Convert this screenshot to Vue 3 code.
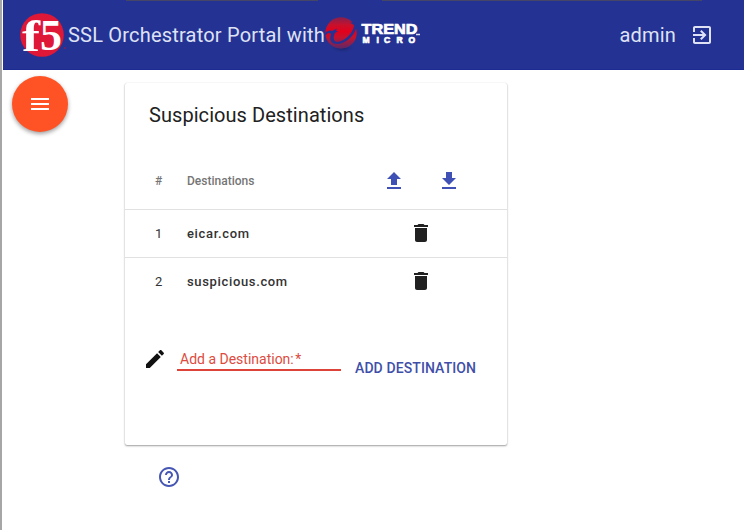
<script setup>
const rows = [
  { id: 1, name: 'eicar.com' },
  { id: 2, name: 'suspicious.com' },
]
</script>

<template>
  <div class="page">
    <header class="toolbar">
      <svg class="f5" width="48" height="48" viewBox="0 0 48 48">
        <circle cx="24" cy="24" r="21.8" fill="#df1838" />
        <text class="f5-letter" x="4" y="39.5" font-size="44" textLength="18" lengthAdjust="spacingAndGlyphs">f</text>
        <text class="f5-letter" x="22" y="39" font-size="45" textLength="22" lengthAdjust="spacingAndGlyphs">5</text>
        <circle cx="47" cy="37" r="1" fill="#7d2065" />
      </svg>
      <span class="title">SSL Orchestrator Portal with</span>
      <svg class="trend" width="98" height="38" viewBox="0 0 98 38">
        <defs>
          <linearGradient id="ball" x1="0" y1="0" x2="0" y2="1">
            <stop offset="0" stop-color="#85204e" />
            <stop offset=".25" stop-color="#c9102c" />
            <stop offset=".45" stop-color="#e2001c" />
            <stop offset=".65" stop-color="#c2132f" />
            <stop offset="1" stop-color="#5b286a" />
          </linearGradient>
          <radialGradient id="shade">
            <stop offset="0" stop-color="#151c5c" />
            <stop offset="1" stop-color="#233393" stop-opacity="0" />
          </radialGradient>
        </defs>
        <ellipse cx="17" cy="31.500" rx="14" ry="6" fill="url(#shade)" />
        <circle cx="16" cy="17" r="15.700" fill="url(#ball)" />
        <path d="M0 17C3 14 6 14 7 15L12 12.500L11 15H13L10 17C8 21 8 25 12 26C19 26 28 17 29 10C29 8 27 8 25 7C30 5 33 8 31 13C28 21 20 28 12 28C6 28 4 24 6 18C4 16 2 17 0 20Z" fill="#243293" />
        <text class="brand" x="36.500" y="17.800" font-size="14.600" textLength="56" lengthAdjust="spacingAndGlyphs">TREND</text>
        <g class="brand" font-size="8.500"><text x="37.500" y="26.600">M</text><text x="51.500" y="26.600">I</text><text x="59" y="26.600">C</text><text x="71.500" y="26.600">R</text><text x="83.500" y="26.600">O</text></g>
        <path d="M91 18.500h4" stroke="#d9ddf2" stroke-width="1.500" />
      </svg>
      <span class="user">admin</span>
      <svg class="logout" width="24" height="24" viewBox="0 0 24 24">
        <path d="M10.090 15.590L11.500 17l5-5-5-5-1.410 1.410L12.670 11H3v2h9.670l-2.580 2.590zM19 3H5c-1.110 0-2 .9-2 2v4h2V5h14v14H5v-4H3v4c0 1.100.89 2 2 2h14c1.100 0 2-.9 2-2V5c0-1.100-.9-2-2-2z" />
      </svg>
    </header>

    <div class="body">
      <button class="fab" type="button">
        <svg width="24" height="24" viewBox="0 0 24 24"><path d="M3 18h18v-2H3v2zm0-5h18v-2H3v2zm0-7v2h18V6H3z" /></svg>
      </button>
      <main class="main">
        <section class="card">
          <h1>Suspicious Destinations</h1>
          <div class="row head">
            <span class="num">#</span>
            <span class="name">Destinations</span>
            <svg class="up" width="24" height="24" viewBox="0 0 24 24"><path d="M9 16h6v-6h4l-7-7-7 7h4zm-4 2h14v2H5z" /></svg>
            <svg class="down" width="24" height="24" viewBox="0 0 24 24"><path d="M19 9h-4V3H9v6H5l7 7 7-7zM5 18v2h14v-2H5z" /></svg>
          </div>
          <div v-for="row in rows" :key="row.id" class="row item">
            <span class="num">{{ row.id }}</span>
            <span class="name">{{ row.name }}</span>
            <svg class="trash" width="24" height="24" viewBox="0 0 24 24"><path d="M6 19c0 1.100.9 2 2 2h8c1.100 0 2-.9 2-2V7H6v12zM19 4h-3.500l-1-1h-5l-1 1H5v2h14V4z" /></svg>
          </div>
          <div class="form">
            <svg class="pencil" width="24" height="24" viewBox="0 0 24 24"><path d="M3 17.250V21h3.750L17.810 9.940l-3.750-3.750L3 17.250zM20.710 7.040c.39-.39.39-1.020 0-1.410l-2.340-2.340c-.39-.39-1.020-.39-1.410 0l-1.830 1.830 3.750 3.750 1.830-1.830z" /></svg>
            <label class="field">Add a Destination: <span class="star">*</span></label>
            <button class="add" type="button">ADD DESTINATION</button>
          </div>
        </section>
        <svg class="help" width="24" height="24" viewBox="0 0 24 24"><path d="M11 18h2v-2h-2v2zm1-16C6.480 2 2 6.480 2 12s4.480 10 10 10 10-4.480 10-10S17.520 2 12 2zm0 18c-4.410 0-8-3.590-8-8s3.590-8 8-8 8 3.590 8 8-3.590 8-8 8zm0-14c-2.210 0-4 1.790-4 4h2c0-1.100.9-2 2-2s2 .9 2 2c0 2-3 1.750-3 5h2c0-2.250 3-2.500 3-5 0-2.210-1.790-4-4-4z" /></svg>
      </main>
    </div>
  </div>
</template>

<style>
body { margin: 0; background: #fff; }
</style>

<style scoped>
.page {
  box-sizing: border-box;
  height: 530px;
  border-left: 2px solid #a6a6a6;
  padding-left: 1px;
  overflow: hidden;
  font-family: Roboto, sans-serif;
  color: #212121;
}
svg { display: block; flex: none; }
button { border: 0; padding: 0; font-family: inherit; }
.toolbar {
  box-sizing: border-box;
  height: 70px;
  display: flex;
  align-items: center;
  padding: 0 30px 0 15px;
  background:
    linear-gradient(#454568, #454568) 123px 0 / 192px 1px no-repeat,
    linear-gradient(#454568, #454568) 379px 0 / 320px 1px no-repeat,
    #243393;
  border-bottom: 1px solid #1b2b91;
  color: #dfe2f4;
  font-size: 20px;
}
.f5-letter { font-family: "Liberation Serif", serif; font-weight: 700; fill: #fff; }
.title { width: 257px; margin-left: 2px; white-space: nowrap; letter-spacing: .2px; }
.brand { font-family: "Liberation Sans", sans-serif; font-weight: 700; fill: #fff; stroke: #fff; stroke-width: .7; }
.user { margin-left: auto; letter-spacing: .2px; }
.logout { margin-left: 14px; fill: #dfe2f4; }
.body { display: flex; align-items: flex-start; }
.fab {
  width: 56px;
  height: 56px;
  margin: 6px 0 0 9px;
  border-radius: 50%;
  background: #ff5325;
  box-shadow: 0 2px 4px rgba(0, 0, 0, .38);
  display: grid;
  place-items: center;
}
.fab svg { fill: #fff; }
.main { margin: 13px 0 0 57px; }
.card {
  width: 382px;
  height: 362px;
  border-radius: 2px;
  box-shadow: 0 1px 2px rgba(0, 0, 0, .38), 0 0 1px rgba(0, 0, 0, .15);
}
h1 { margin: 0; height: 70px; padding: 20px 24px 0; box-sizing: border-box; font-size: 20px; line-height: 24px; font-weight: 400; letter-spacing: .06px; }
.row { display: flex; align-items: center; box-sizing: border-box; font-size: 13px; }
.head { height: 56px; color: #757575; font-size: 12px; font-weight: 500; }
.item { height: 48px; border-top: 1px solid #e1e1e1; color: #333; }
.num { width: 32px; padding-left: 30px; }
.head .name { width: 195px; }
.item .name { width: 222px; font-weight: 500; letter-spacing: .65px; }
.up, .down { fill: #3f51b5; }
.down { margin-left: 31px; }
.trash { margin-top: -2px; fill: #212121; }
.form { display: flex; align-items: flex-start; padding: 42px 0 0 18px; }
.pencil { fill: #111; }
.field { box-sizing: border-box; width: 164px; height: 24px; margin-left: 10px; padding-left: 3px; border-bottom: 2px solid #dd4338; color: #dd4b40; font-size: 14px; line-height: 24px; white-space: nowrap; }
.star { margin-left: -2px; }
.add { margin: 13px 0 0 14px; background: none; color: #3f4fa9; font-size: 14px; line-height: 16px; font-weight: 500; letter-spacing: .1px; white-space: nowrap; }
.help { margin: 20px 0 0 32px; fill: #4656b3; }
</style>
